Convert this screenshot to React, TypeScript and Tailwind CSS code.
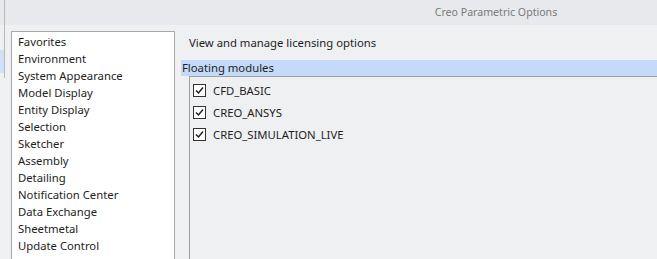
const categories = [
  'Favorites',
  'Environment',
  'System Appearance',
  'Model Display',
  'Entity Display',
  'Selection',
  'Sketcher',
  'Assembly',
  'Detailing',
  'Notification Center',
  'Data Exchange',
  'Sheetmetal',
  'Update Control',
  'Additive Manufacturing',
]

const modules = ['CFD_BASIC', 'CREO_ANSYS', 'CREO_SIMULATION_LIVE']

function Check() {
  return (
    <span className="w-[13px] h-[13px] border border-[#333333] bg-white flex items-center justify-center">
      <svg width="9" height="9" viewBox="0 0 9 9">
        <path d="M1 4.5 L3.5 7 L8 1.5" fill="none" stroke="#222" strokeWidth="1.5" />
      </svg>
    </span>
  )
}

export default function App() {
  return (
    <div className="w-[657px] h-[259px] overflow-hidden bg-[#eff0f2] flex flex-col text-[11.3px] text-[#1e1e1e]" style={{ fontFamily: '"Noto Sans", "Open Sans", sans-serif' }}>
      <div className="h-[25px] shrink-0 bg-[#e8e9ec] flex">
        <div className="w-[5px] border-r border-[#b8b8b8]" />
        <div className="flex-1 flex items-center justify-center pl-[330px] text-[#7a7a7a] text-[10.6px]">Creo Parametric Options</div>
      </div>
      <div className="flex flex-1 min-h-0">
        <div className="w-[5px] shrink-0 flex flex-col border-r border-[#b8b8b8] h-[53px]">
          <div className="h-[25px]" />
          <div className="h-[23px] bg-[#cfe0f8]" />
        </div>
        <div className="w-[164px] shrink-0 ml-[6px] mt-[6px] bg-white border border-[#a9a9a9] border-b-0 pl-[6px] pt-[1px]">
          {categories.map(c => (
            <div key={c} className="h-[17px] leading-[17px] whitespace-nowrap">{c}</div>
          ))}
        </div>
        <div className="flex-1 flex flex-col pl-[6px] pt-[9px]">
          <div className="pl-[8px] h-[18px] leading-[18px]">View and manage licensing options</div>
          <div className="mt-[8px] h-[16px] leading-[16px] bg-[#c4daf8] pl-[1px]">Floating modules</div>
          <div className="flex-1 ml-[8px] border-l border-t border-[#a0a0a0] pl-[3px] pt-[7px] flex flex-col gap-[9px]">
            {modules.map(m => (
              <div key={m} className="flex items-center gap-[7px] h-[13px]">
                <Check />
                <span className="leading-[13px]">{m}</span>
              </div>
            ))}
          </div>
        </div>
      </div>
    </div>
  )
}
